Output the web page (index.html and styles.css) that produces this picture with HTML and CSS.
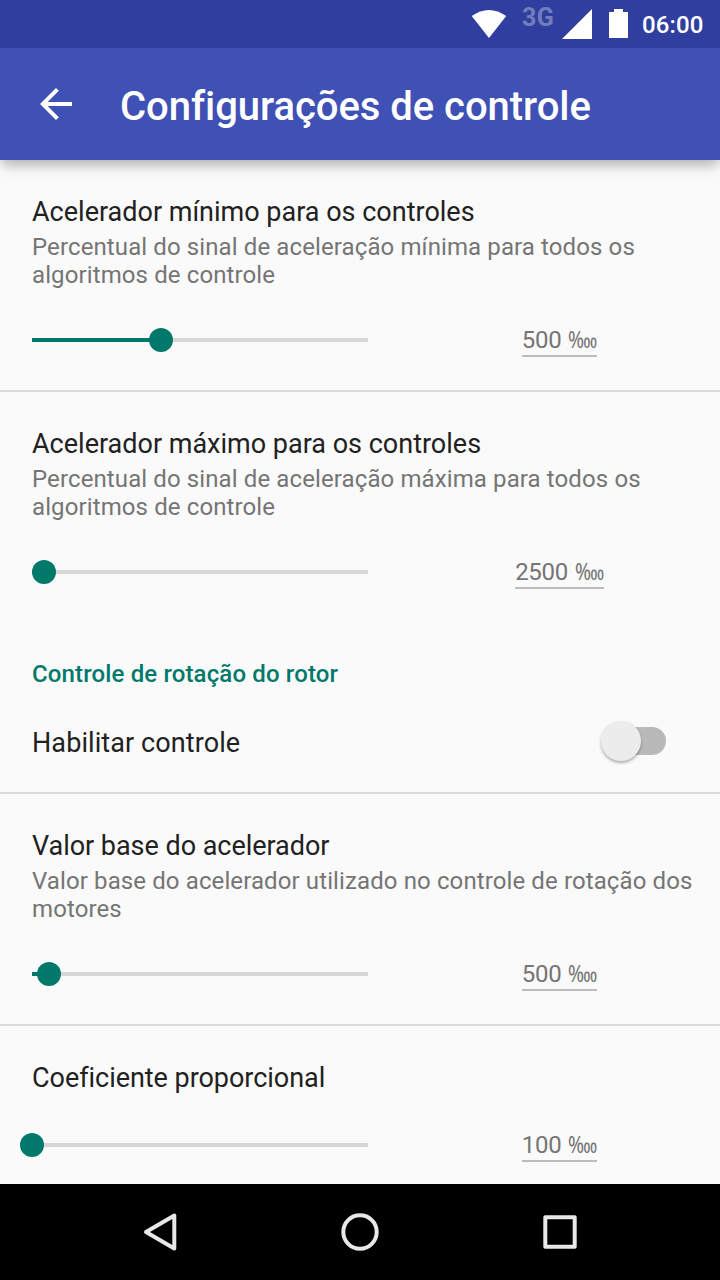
FILE: index.html
```html
<!DOCTYPE html>
<html lang="pt-BR">
<head>
<meta charset="utf-8">
<title>Configurações de controle</title>
<link rel="stylesheet" href="styles.css">
</head>
<body>
<div class="screen">
  <div class="statusbar">
    <svg class="wifi" width="36" height="28" viewBox="0 0 36 28"><path d="M.7 6Q18-6 35.200 6L18 28Z" fill="#fff"/></svg>
    <span class="network">3G</span>
    <svg class="signal" width="30" height="30" viewBox="0 0 30 30"><path d="M30 0V30H0Z" fill="#fff"/></svg>
    <svg class="battery" width="19" height="29" viewBox="0 0 19 29"><path d="M5 0h9v3h5v26H0V3h5Z" fill="#fff"/></svg>
    <span class="clock">06:00</span>
  </div>
  <header class="appbar">
    <svg class="back" width="48" height="48" viewBox="0 0 24 24"><path d="M20 11H7.83l5.59-5.59L12 4l-8 8 8 8 1.41-1.41L7.83 13H20v-2z" fill="#fff"/></svg>
    <h1 class="heading">Configurações de controle</h1>
  </header>
  <main class="list">
    <section class="pref">
      <h2 class="title">Acelerador mínimo para os controles</h2>
      <p class="summary">Percentual do sinal de aceleração mínima para todos os<br>algoritmos de controle</p>
      <div class="control"><div class="slider"><div class="fill" style="width:129px"></div></div><div class="value"><span class="number">500 <span class="unit">‱</span></span></div></div>
    </section>
    <section class="pref last">
      <h2 class="title">Acelerador máximo para os controles</h2>
      <p class="summary">Percentual do sinal de aceleração máxima para todos os<br>algoritmos de controle</p>
      <div class="control"><div class="slider"><div class="fill" style="width:12px"></div></div><div class="value"><span class="number">2500 <span class="unit">‱</span></span></div></div>
    </section>
    <h3 class="category">Controle de rotação do rotor</h3>
    <section class="toggle-row">
      <h2 class="title">Habilitar controle</h2>
      <div class="switch"><div class="thumb"></div></div>
    </section>
    <section class="pref">
      <h2 class="title tight">Valor base do acelerador</h2>
      <p class="summary">Valor base do acelerador utilizado no controle de rotação dos<br>motores</p>
      <div class="control"><div class="slider"><div class="fill" style="width:17px"></div></div><div class="value"><span class="number">500 <span class="unit">‱</span></span></div></div>
    </section>
    <section class="pref last">
      <h2 class="title tight">Coeficiente proporcional</h2>
      <div class="control compact"><div class="slider"><div class="fill" style="width:0px"></div></div><div class="value"><span class="number">100 <span class="unit">‱</span></span></div></div>
    </section>
  </main>
  <nav class="navbar">
    <svg width="40" height="40" viewBox="0 0 40 40"><path d="M34.300 3.600V36.400L6 20Z"/></svg>
    <svg width="40" height="40" viewBox="0 0 40 40"><circle cx="20" cy="20" r="16.700"/></svg>
    <svg width="40" height="40" viewBox="0 0 40 40"><rect x="5.300" y="5.300" width="29.400" height="29.400"/></svg>
  </nav>
</div>
</body>
</html>
```
FILE: styles.css
```css
* { box-sizing: border-box; margin: 0; }
body { background: #fafafa; font-family: Roboto, "Noto Sans", sans-serif; }
.screen { width: 720px; height: 1280px; display: flex; flex-direction: column; overflow: hidden; }
.statusbar { height: 48px; flex: none; background: #303f9f; color: #fff; display: flex; align-items: flex-start; padding-left: 471px; }
.wifi { margin-top: 10px; }
.network { margin: 4px 0 0 15px; width: 40px; font-weight: 700; font-size: 25px; line-height: 28px; letter-spacing: .5px; color: #737dbd; }
.signal { margin-top: 9px; }
.battery { margin: 9px 0 0 17px; }
.clock { margin: 10px 0 0 14px; font-size: 24px; line-height: 30px; font-weight: 500; letter-spacing: .15px; }
.appbar { height: 112px; flex: none; background: #3f51b5; color: #fff; display: flex; align-items: center; padding-left: 32px; box-shadow: 0 7px 12px -2px rgba(0,0,0,.3); clip-path: inset(0 0 -24px 0); z-index: 1; }
.heading { margin: 6px 0 0 40px; font-size: 40px; line-height: 48px; font-weight: 500; letter-spacing: -.04px; white-space: nowrap; }
.list { height: 1024px; flex: none; overflow: hidden; }
.pref { height: 232px; border-bottom: 2px solid #dadada; padding: 34px 0 0 32px; }
.pref.last { border: 0; }
.title { font-size: 27px; line-height: 36px; font-weight: 400; color: #212121; white-space: nowrap; }
.tight { letter-spacing: -.04px; }
.summary { margin-top: 3px; font-size: 24px; line-height: 28px; letter-spacing: .11px; color: #757575; white-space: nowrap; }
.control { display: flex; height: 48px; align-items: center; margin-top: 27px; }
.slider { width: 336px; height: 4px; flex: none; background: #d6d6d6; }
.fill { position: relative; height: 4px; background: #00796b; }
.fill::after { content: ""; position: absolute; right: -12px; top: -10px; width: 24px; height: 24px; border-radius: 50%; background: #00796b; }
.value { flex: 1; padding-left: 31px; display: flex; justify-content: center; color: #757575; font-size: 24px; line-height: 28px; }
.number { border-bottom: 2px solid #bcbcbc; margin-top: 3px; height: 31px; letter-spacing: -.3px; word-spacing: 1px; white-space: nowrap; }
.unit { display: inline-block; transform: scaleX(.79); transform-origin: left; margin-right: -7.500px; }
.category { height: 64px; margin-top: 18px; padding-left: 32px; font-size: 24px; line-height: 64px; font-weight: 500; letter-spacing: .14px; color: #00796b; }
.toggle-row { height: 88px; border-bottom: 2px solid #dadada; display: flex; justify-content: space-between; padding: 19px 54px 0 32px; }
.toggle-row .title { letter-spacing: .09px; }
.switch { width: 56px; height: 28px; border-radius: 14px; margin-top: 2px; background: #b9b9b9; position: relative; }
.thumb { position: absolute; left: -9px; top: -6px; width: 40px; height: 40px; border-radius: 50%; background: #ececec; box-shadow: 0 2px 3px rgba(0,0,0,.3); }
.compact { margin-top: 25px; }
.navbar { height: 96px; flex: none; background: #000; display: flex; justify-content: center; align-items: center; gap: 160px; fill: none; stroke: #e8e8e8; stroke-width: 4; stroke-linejoin: round; }
```
